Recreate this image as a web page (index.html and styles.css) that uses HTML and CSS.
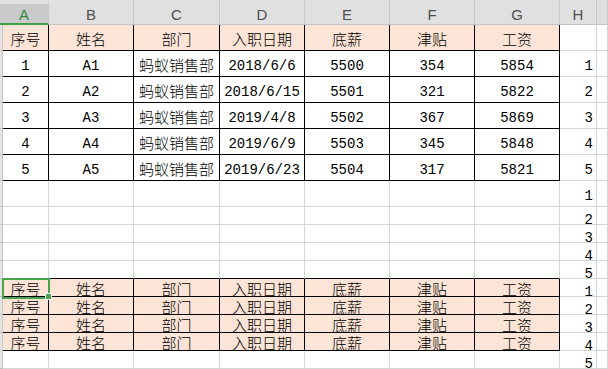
FILE: index.html
```html
<!DOCTYPE html>
<html lang="zh-CN">
<head>
<meta charset="utf-8">
<title>工资表</title>
<link rel="stylesheet" href="styles.css">
</head>
<body>
<div class="sheet">
  <!-- column headers -->
  <div class="ch sel">A</div>
  <div class="ch">B</div>
  <div class="ch">C</div>
  <div class="ch">D</div>
  <div class="ch">E</div>
  <div class="ch">F</div>
  <div class="ch">G</div>
  <div class="ch">H</div>
  <div class="ch"></div>

  <!-- row 1 -->
  <div class="s"></div>
  <div class="c t p">序号</div><div class="c t p">姓名</div><div class="c t p">部门</div><div class="c t p">入职日期</div><div class="c t p">底薪</div><div class="c t p">津贴</div><div class="c t p">工资</div>
  <div class="c"></div><div class="c"></div>

  <!-- row 2 -->
  <div class="s"></div>
  <div class="c t n">1</div><div class="c t n">A1</div><div class="c t">蚂蚁销售部</div><div class="c t n">2018/6/6</div><div class="c t n">5500</div><div class="c t n">354</div><div class="c t n">5854</div>
  <div class="c n r">1</div><div class="c"></div>

  <!-- row 3 -->
  <div class="s"></div>
  <div class="c t n">2</div><div class="c t n">A2</div><div class="c t">蚂蚁销售部</div><div class="c t n">2018/6/15</div><div class="c t n">5501</div><div class="c t n">321</div><div class="c t n">5822</div>
  <div class="c n r">2</div><div class="c"></div>

  <!-- row 4 -->
  <div class="s"></div>
  <div class="c t n">3</div><div class="c t n">A3</div><div class="c t">蚂蚁销售部</div><div class="c t n">2019/4/8</div><div class="c t n">5502</div><div class="c t n">367</div><div class="c t n">5869</div>
  <div class="c n r">3</div><div class="c"></div>

  <!-- row 5 -->
  <div class="s"></div>
  <div class="c t n">4</div><div class="c t n">A4</div><div class="c t">蚂蚁销售部</div><div class="c t n">2019/6/9</div><div class="c t n">5503</div><div class="c t n">345</div><div class="c t n">5848</div>
  <div class="c n r">4</div><div class="c"></div>

  <!-- row 6 -->
  <div class="s"></div>
  <div class="c t n">5</div><div class="c t n">A5</div><div class="c t">蚂蚁销售部</div><div class="c t n">2019/6/23</div><div class="c t n">5504</div><div class="c t n">317</div><div class="c t n">5821</div>
  <div class="c n r">5</div><div class="c"></div>

  <!-- row 7 -->
  <div class="s"></div>
  <div class="c"></div><div class="c"></div><div class="c"></div><div class="c"></div><div class="c"></div><div class="c"></div><div class="c"></div>
  <div class="c n r">1</div><div class="c"></div>

  <!-- row 8 -->
  <div class="s"></div>
  <div class="c lo"></div><div class="c lo"></div><div class="c lo"></div><div class="c lo"></div><div class="c lo"></div><div class="c lo"></div><div class="c lo"></div>
  <div class="c lo n r">2</div><div class="c lo"></div>

  <!-- row 9 -->
  <div class="s"></div>
  <div class="c lo"></div><div class="c lo"></div><div class="c lo"></div><div class="c lo"></div><div class="c lo"></div><div class="c lo"></div><div class="c lo"></div>
  <div class="c lo n r">3</div><div class="c lo"></div>

  <!-- row 10 -->
  <div class="s"></div>
  <div class="c lo"></div><div class="c lo"></div><div class="c lo"></div><div class="c lo"></div><div class="c lo"></div><div class="c lo"></div><div class="c lo"></div>
  <div class="c lo n r">4</div><div class="c lo"></div>

  <!-- row 11 -->
  <div class="s"></div>
  <div class="c lo ab"></div><div class="c lo ab"></div><div class="c lo ab"></div><div class="c lo ab"></div><div class="c lo ab"></div><div class="c lo ab"></div><div class="c lo ab"></div>
  <div class="c lo n r">5</div><div class="c lo"></div>

  <!-- row 12 -->
  <div class="s"></div>
  <div class="c lo t p active">序号<span class="selbox"></span><span class="handle"></span></div><div class="c lo t p">姓名</div><div class="c lo t p">部门</div><div class="c lo t p">入职日期</div><div class="c lo t p">底薪</div><div class="c lo t p">津贴</div><div class="c lo t p">工资</div>
  <div class="c lo n r">1</div><div class="c lo"></div>

  <!-- row 13 -->
  <div class="s"></div>
  <div class="c lo t p">序号</div><div class="c lo t p">姓名</div><div class="c lo t p">部门</div><div class="c lo t p">入职日期</div><div class="c lo t p">底薪</div><div class="c lo t p">津贴</div><div class="c lo t p">工资</div>
  <div class="c lo n r">2</div><div class="c lo"></div>

  <!-- row 14 -->
  <div class="s"></div>
  <div class="c lo t p">序号</div><div class="c lo t p">姓名</div><div class="c lo t p">部门</div><div class="c lo t p">入职日期</div><div class="c lo t p">底薪</div><div class="c lo t p">津贴</div><div class="c lo t p">工资</div>
  <div class="c lo n r">3</div><div class="c lo"></div>

  <!-- row 15 -->
  <div class="s"></div>
  <div class="c lo t p">序号</div><div class="c lo t p">姓名</div><div class="c lo t p">部门</div><div class="c lo t p">入职日期</div><div class="c lo t p">底薪</div><div class="c lo t p">津贴</div><div class="c lo t p">工资</div>
  <div class="c lo n r">4</div><div class="c lo"></div>

  <!-- row 16 -->
  <div class="s"></div>
  <div class="c lo"></div><div class="c lo"></div><div class="c lo"></div><div class="c lo"></div><div class="c lo"></div><div class="c lo"></div><div class="c lo"></div>
  <div class="c lo n r">5</div><div class="c lo"></div>
</div>
</body>
</html>
```

FILE: styles.css
```css
* {
  box-sizing: border-box;
}

html,
body {
  margin: 0;
  padding: 0;
  background: #ffffff;
  overflow: hidden;
}

.sheet {
  display: grid;
  grid-template-columns: 3px 46px 85px 86px 85px 85px 85px 85px 37px 1fr;
  grid-template-rows: 25px repeat(7, 26px) repeat(9, 18px);
  width: 608px;
  height: 369px;
}

/* column header */
.ch {
  display: flex;
  align-items: center;
  justify-content: center;
  padding-top: 5px;
  background: #e0e0e0;
  border-right: 1px solid #cacaca;
  border-bottom: 1px solid #c4c4c4;
  font: 15px/1 "Liberation Sans", Arial, sans-serif;
  color: #4f4f4f;
}

.ch.sel {
  grid-column: span 2;
  padding-top: 2px;
  background: #c9c9c9;
  border-top: 4px solid #e0e0e0;
  border-bottom: 2px solid #3f9f45;
  color: #2b8a3e;
}

/* row header sliver */
.s {
  background: #e4e4e4;
  border-right: 1px solid #c6c6c6;
  border-bottom: 1px solid #c2c2c2;
}

/* cells */
.c {
  display: flex;
  align-items: center;
  justify-content: center;
  padding-top: 2px;
  border-right: 1px solid #d6d6d6;
  border-bottom: 1px solid #d6d6d6;
  font: 300 15px/1 "Noto Sans CJK SC", sans-serif;
  color: #000000;
  white-space: nowrap;
}

.c.n {
  padding-top: 4px;
  font: 14px/1 "Liberation Mono", "Noto Sans CJK SC", monospace;
}

.c.lo {
  align-items: flex-end;
  padding-top: 0;
}

.c.lo.n {
  line-height: 8px;
}

.c.r {
  justify-content: flex-end;
  padding-right: 3px;
}

.c.p {
  background: #fce4d6;
}

.c.t {
  border-right-color: #000000;
  border-bottom-color: #000000;
}

.c.ab {
  border-bottom-color: #000000;
}

/* active cell */
.active {
  position: relative;
}

.selbox {
  position: absolute;
  left: -1px;
  top: -1px;
  right: -2px;
  bottom: -3px;
  border: 2px solid #4aa24a;
}

.handle {
  position: absolute;
  right: -3px;
  bottom: -3px;
  width: 5px;
  height: 5px;
  background: #4aa24a;
  box-shadow: 0 0 0 1px #ffffff;
}
```
